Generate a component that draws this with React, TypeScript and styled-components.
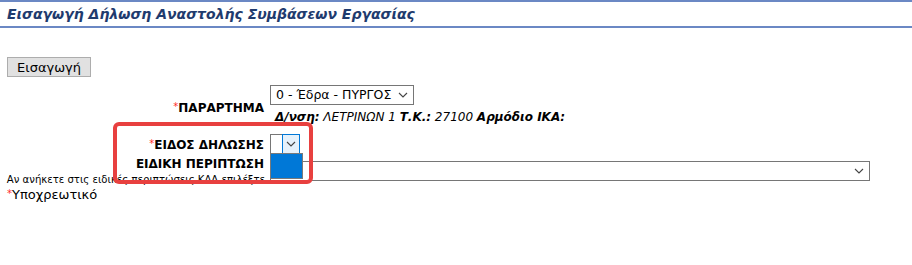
import React from "react";
import styled, { createGlobalStyle } from "styled-components";

const GlobalStyle = createGlobalStyle`
  html, body {
    margin: 0;
    padding: 0;
    background: #ffffff;
  }

  body {
    font-family: "DejaVu Sans", Verdana, sans-serif;
    color: #000000;
  }
`;

const Chevron = () => (
  <svg width="10" height="6" viewBox="0 0 10 6">
    <polyline points="1,1 5,5 9,1" fill="none" stroke="#444" strokeWidth="1.1" />
  </svg>
);

function App() {
  return (
    <Page>
      <GlobalStyle />
      <TitleBar>Εισαγωγή Δήλωση Αναστολής Συμβάσεων Εργασίας</TitleBar>

      <ActionBar>
        <Button>Εισαγωγή</Button>
      </ActionBar>

      <Form>
        <Row>
          <Label $shift={2}>
            <Required>*</Required>ΠΑΡΑΡΤΗΜΑ
          </Label>
          <Value>
            <SelectBox $width={144}>
              <span>0 - Έδρα - ΠΥΡΓΟΣ</span>
              <Arrow>
                <Chevron />
              </Arrow>
            </SelectBox>
            <Address>
              <b>Δ/νση:</b> ΛΕΤΡΙΝΩΝ 1 <b>Τ.Κ.:</b> 27100 <b>Αρμόδιο ΙΚΑ:</b>
            </Address>
          </Value>
        </Row>

        <Row $top={8}>
          <Label>
            <Required>*</Required>ΕΙΔΟΣ ΔΗΛΩΣΗΣ
          </Label>
          <Value>
            <MenuAnchor>
              <SelectBox $width={30}>
                <span />
                <Arrow $hover>
                  <Chevron />
                </Arrow>
              </SelectBox>
              <OpenList />
            </MenuAnchor>
          </Value>
        </Row>

        <Row $top={2}>
          <Label>
            ΕΙΔΙΚΗ ΠΕΡΙΠΤΩΣΗ
            <Help>Αν ανήκετε στις ειδικές περιπτώσεις ΚΑΔ επιλέξτε</Help>
          </Label>
          <Value>
            <SelectBox $width={600}>
              <span />
              <Arrow>
                <Chevron />
              </Arrow>
            </SelectBox>
          </Value>
        </Row>

        <Highlight />
      </Form>

      <Note>
        <Required>*</Required>Υποχρεωτικό
      </Note>
    </Page>
  );
}

const Page = styled.div`
  width: 912px;
  height: 265px;
  position: relative;
`;

const TitleBar = styled.div`
  height: 24px;
  line-height: 24px;
  border-top: 2px solid #6b88c4;
  border-bottom: 2px solid #6b88c4;
  padding-left: 7px;
  font-size: 14px;
  font-weight: bold;
  font-style: italic;
  color: #1f3b6e;
`;

const ActionBar = styled.div`
  padding: 29px 0 0 7px;
  height: 20px;
`;

const Button = styled.button`
  display: block;
  width: 84px;
  height: 20px;
  padding: 0;
  background: #e1e1e1;
  border: 1px solid #adadad;
  font-family: "DejaVu Sans", Verdana, sans-serif;
  font-size: 13px;
  color: #000;
`;

const Form = styled.div`
  position: relative;
  margin-top: 8px;
`;

const Row = styled.div<{ $top?: number }>`
  display: flex;
  align-items: center;
  margin-top: ${(p) => p.$top ?? 0}px;
`;

const Label = styled.div<{ $shift?: number }>`
  width: 264px;
  flex: 0 0 264px;
  text-align: right;
  font-size: 12px;
  font-weight: bold;
  line-height: 16px;
  white-space: nowrap;
  padding-top: ${(p) => (p.$shift ?? 0) * 2}px;
  box-sizing: border-box;
`;

const Required = styled.span`
  color: #ff2a2a;
  font-weight: normal;
  font-size: 10px;
  vertical-align: 2px;
`;

const Help = styled.span`
  display: block;
  font-size: 10.1px;
  font-weight: normal;
  line-height: 13px;
  margin-top: 1px;
  margin-right: -1px;
`;

const Value = styled.div`
  margin-left: 6px;
  display: flex;
  flex-direction: column;
`;

const SelectBox = styled.div<{ $width: number }>`
  width: ${(p) => p.$width}px;
  height: 20px;
  box-sizing: border-box;
  border: 1px solid #767676;
  background: #ffffff;
  display: flex;
  align-items: stretch;
  justify-content: space-between;
  font-size: 12.5px;
  line-height: 18px;

  span {
    padding-left: 5px;
    white-space: nowrap;
  }
`;

const Arrow = styled.div<{ $hover?: boolean }>`
  width: 16px;
  display: flex;
  align-items: center;
  justify-content: center;
  margin: ${(p) => (p.$hover ? "-1px -1px -1px 0" : "0 2px 0 0")};
  background: ${(p) => (p.$hover ? "#e5f1fb" : "transparent")};
  border: ${(p) => (p.$hover ? "1px solid #0078d7" : "none")};
`;

const Address = styled.div`
  margin: 3px 0 0 5px;
  font-size: 12px;
  font-style: italic;
  line-height: 18px;
  white-space: nowrap;
`;

const MenuAnchor = styled.div`
  position: relative;
`;

const OpenList = styled.div`
  position: absolute;
  top: 19px;
  left: 0;
  width: 33px;
  height: 26px;
  box-sizing: border-box;
  border: 1px solid #7a7a7a;
  background: #0078d7;
  z-index: 2;
`;

const Highlight = styled.div`
  position: absolute;
  left: 113px;
  top: 37px;
  width: 200px;
  height: 62px;
  box-sizing: border-box;
  border: 4px solid #e8403f;
  border-radius: 6px;
  z-index: 3;
`;

const Note = styled.div`
  padding: 1px 0 0 7px;
  font-size: 13px;
`;

export default App;
